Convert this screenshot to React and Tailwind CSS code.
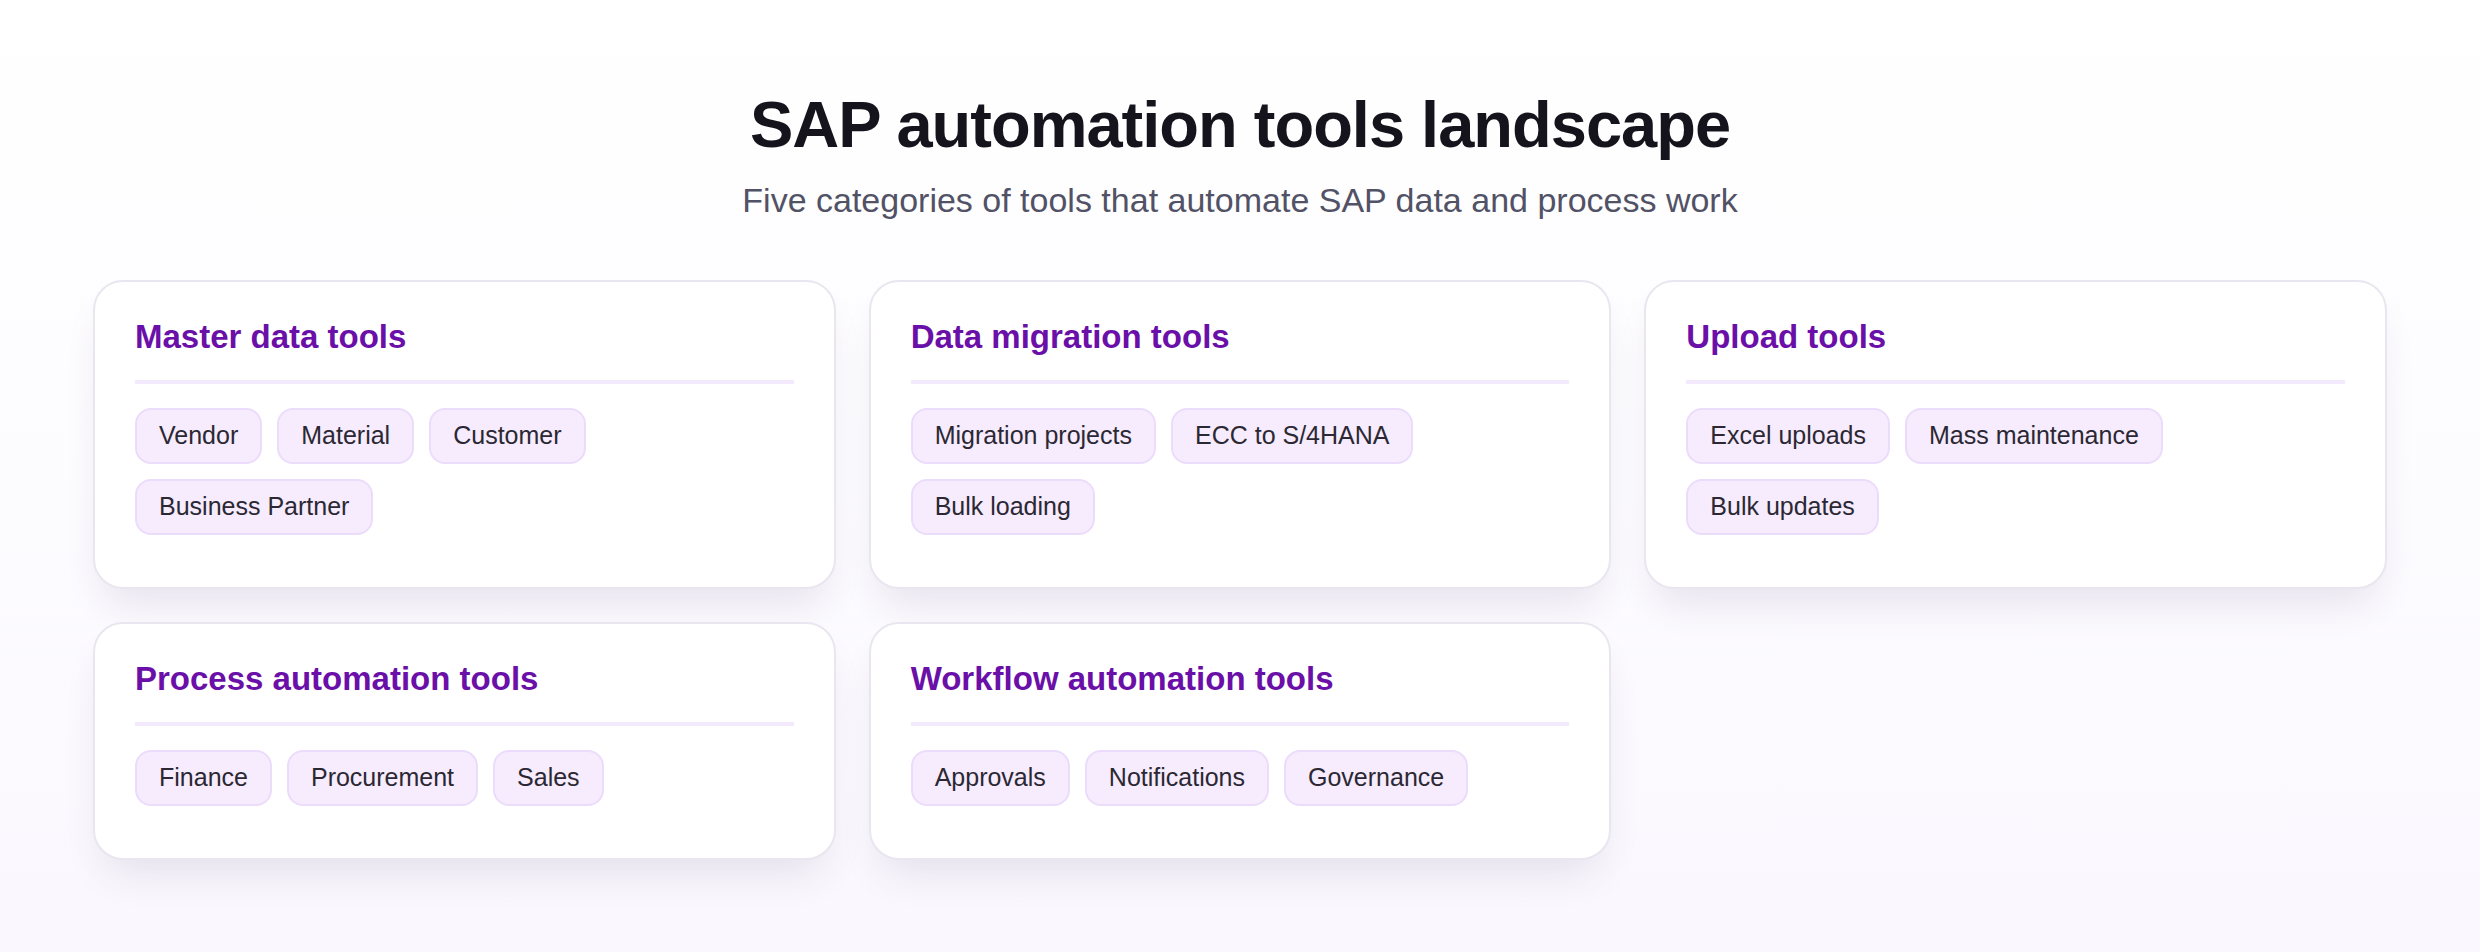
export default function App() {
  const cards = [
    { t: "Master data tools", c: ["Vendor", "Material", "Customer", "Business Partner"] },
    { t: "Data migration tools", c: ["Migration projects", "ECC to S/4HANA", "Bulk loading"] },
    { t: "Upload tools", c: ["Excel uploads", "Mass maintenance", "Bulk updates"] },
    { t: "Process automation tools", c: ["Finance", "Procurement", "Sales"] },
    { t: "Workflow automation tools", c: ["Approvals", "Notifications", "Governance"] },
  ];
  return (
    <div className="w-[2480px] h-[952px] bg-gradient-to-b from-white to-[#faf8fe] px-[93px] pt-[84px]" style={{ fontFamily: '"Liberation Sans", Arial, sans-serif' }}>
      <h1 className="text-center text-[65px] leading-[82px] font-bold text-[#15141c] tracking-[-1px]">SAP automation tools landscape</h1>
      <p className="text-center text-[34px] leading-[44px] text-[#525266] mt-[12px]">Five categories of tools that automate SAP data and process work</p>
      <div className="grid grid-cols-3 gap-x-[33px] gap-y-[33px] mt-[58px]">
        {cards.map((k) => (
          <div key={k.t} className="bg-white border-2 border-[#e9e6f0] rounded-[30px] px-[40px] pt-[33px] pb-[52px] shadow-[0_24px_40px_-12px_rgba(60,40,100,0.12)]">
            <h2 className="text-[33px] leading-[44px] font-bold text-[#6a0fa8]">{k.t}</h2>
            <div className="h-[4px] bg-[#f4eafd] mt-[21px] mb-[24px]" />
            <div className="flex flex-wrap gap-x-[15px] gap-y-[15px]">
              {k.c.map((x) => (
                <span key={x} className="bg-[#f6ecfd] border-2 border-[#ecdcfb] rounded-[16px] px-[22px] h-[56px] flex items-center text-[25px] text-[#2b2833]">{x}</span>
              ))}
            </div>
          </div>
        ))}
      </div>
    </div>
  );
}
